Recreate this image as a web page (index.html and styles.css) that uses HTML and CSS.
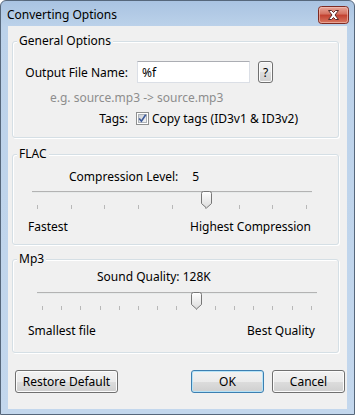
FILE: index.html
```html
<!DOCTYPE html>
<html lang="en">
<head>
	<meta charset="UTF-8">
	<title>Converting Options</title>
<link rel="stylesheet" href="styles.css">
</head>

<body>
<div class="window">
    <div class="titlebar">
        <span class="title">Converting Options</span>
        <span class="close">
            <svg width="31" height="18" viewBox="0 0 31 18">
                <defs>
                    <linearGradient id="red" x1="0" y1="0" x2="0" y2="1">
                        <stop offset="0" stop-color="#e9a99c"/>
                        <stop offset="0.45" stop-color="#d4705f"/>
                        <stop offset="0.5" stop-color="#c2402f"/>
                        <stop offset="1" stop-color="#d97a63"/>
                    </linearGradient>
                </defs>
                <rect x="0.5" y="0.5" width="30" height="17" rx="3" fill="url(#red)" stroke="#7d2a22"/>
                <rect x="1.5" y="1.5" width="28" height="15" rx="2" fill="none" stroke="#f3c7bd" stroke-opacity="0.6"/>
                <path d="M10.5,4.5 h3 l2,2 l2,-2 h3 l-3.5,4.5 l3.5,4.5 h-3 l-2,-2 l-2,2 h-3 l3.5,-4.5 z" fill="#fff" stroke="#5b2a26" stroke-width="1"/>
            </svg>
        </span>
    </div>
    <div class="client">
        <div class="group general">
            <div class="group-title">General Options</div>
            <div class="row first">
                <label class="field-label" for="output_name">Output File Name:</label>
                <input class="textbox" type="text" id="output_name" value="%f">
                <span class="button help">?</span>
            </div>
            <div class="hint">e.g. source.mp3 -&gt; source.mp3</div>
            <div class="row tags">
                <span class="field-label">Tags:</span>
                <span class="checkbox">
                    <svg width="13" height="13" viewBox="0 0 13 13">
                        <defs>
                            <linearGradient id="chk" x1="0" y1="0" x2="1" y2="1">
                                <stop offset="0" stop-color="#cbcfd5"/>
                                <stop offset="1" stop-color="#f6f6f6"/>
                            </linearGradient>
                        </defs>
                        <rect x="0.5" y="0.5" width="12" height="12" fill="#fff" stroke="#8e8f8f"/>
                        <rect x="2.5" y="2.5" width="8" height="8" fill="url(#chk)" stroke="#aeb3b9"/>
                        <path d="M3.2,6.6 l2.2,2.6 l4.3,-6.4" fill="none" stroke="#3d5a99" stroke-width="1.6"/>
                    </svg>
                </span>
                <span>Copy tags (ID3v1 &amp; ID3v2)</span>
            </div>
        </div>

        <div class="group flac">
            <div class="group-title">FLAC</div>
            <div class="caption">Compression Level:<span class="level">5</span></div>
            <div class="slider">
                <div class="track"></div>
                <div class="ticks">
                    <i></i><i></i><i></i><i></i><i></i><i></i><i></i><i></i><i></i>
                </div>
                <span class="thumb" style="left: 62.5%"></span>
            </div>
            <div class="ends">
                <span>Fastest</span>
                <span>Highest Compression</span>
            </div>
        </div>

        <div class="group mp3">
            <div class="group-title">Mp3</div>
            <div class="caption">Sound Quality: 128K</div>
            <div class="slider">
                <div class="track"></div>
                <div class="ticks">
                    <i></i><i></i><i></i><i></i><i></i><i></i><i></i><i></i><i></i><i></i><i></i><i></i><i></i><i></i><i></i>
                </div>
                <span class="thumb" style="left: 57.14%"></span>
            </div>
            <div class="ends">
                <span>Smallest file</span>
                <span>Best Quality</span>
            </div>
        </div>

        <div class="actions">
            <span class="button restore">Restore Default</span>
            <span class="spacer"></span>
            <span class="button ok">OK</span>
            <span class="button cancel">Cancel</span>
        </div>
    </div>
</div>
</body>
</html>
```

FILE: styles.css
```css
body {
    margin: 0;
    font-family: "Segoe UI", "Noto Sans", "Open Sans", sans-serif;
    font-size: 12px;
    color: #000;
    background: #fff;
}

.window {
    width: 355px;
    height: 415px;
    box-sizing: border-box;
    border: 1px solid #56677b;
    border-radius: 6px 6px 0 0;
    background: linear-gradient(#a9c3e1, #bcd2ea 26px, #c3d7ed);
    padding: 0 7px 5px;
    display: flex;
    flex-direction: column;
}

.titlebar {
    height: 25px;
    display: flex;
    align-items: center;
    justify-content: space-between;
}
.title {
    margin-left: -1px;
    margin-top: 2px;
}
.close {
    display: flex;
    margin: 2px -2px 0 0;
}

.client {
    flex: 1;
    background: #f0f0f0;
}

/* group boxes */
.group {
    box-sizing: border-box;
    margin: 15px 8px 0 4px;
    border: 1px solid #d5dfe5;
    border-radius: 3px;
    box-shadow: inset 1px 1px 0 #fff, 1px 1px 0 #fff;
}
.general {
    height: 97px;
}
.flac {
    height: 91px;
    margin-top: 16px;
}
.mp3 {
    height: 94px;
    margin-top: 14px;
}
.group-title {
    width: fit-content;
    margin: -8px 0 0 4px;
    padding: 0 2px;
    line-height: 14px;
    background: #f0f0f0;
}

.row {
    display: flex;
    align-items: center;
}
.first {
    margin-top: 13px;
}
.field-label {
    width: 115px;
    text-align: right;
    margin-right: 9px;
}
.textbox {
    width: 113px;
    height: 22px;
    box-sizing: border-box;
    margin: 0 8px 0 0;
    padding: 0 4px;
    border: 1px solid #dbdfe6;
    border-top-color: #abadb3;
    font: inherit;
    outline: none;
}
.hint {
    color: #8d8d8d;
    margin: 7px 0 0 37px;
    line-height: 15px;
}
.tags {
    margin-top: 6px;
    line-height: 15px;
}
.tags .field-label {
    margin-right: 8px;
}
.checkbox {
    display: flex;
    margin-right: 3px;
}

.button {
    display: flex;
    align-items: center;
    justify-content: center;
    box-sizing: border-box;
    height: 23px;
    border: 1px solid #707070;
    border-radius: 3px;
    background: linear-gradient(#f2f2f2, #ebebeb 50%, #dddddd 50%, #cfcfcf);
    box-shadow: inset 0 0 0 1px #fcfcfc;
}
.help {
    width: 15px;
    height: 22px;
}

/* sliders */
.caption {
    line-height: 14px;
}
.flac .caption {
    margin: 9px 0 0 56px;
}
.level {
    margin-left: 14px;
}
.mp3 .caption {
    margin: 4px 0 0 84px;
}

.slider {
    position: relative;
    height: 25px;
    margin: 7px 31px 0 24px;
}
.mp3 .slider {
    margin: 8px 26px 0 29px;
}
.track {
    height: 1px;
    margin: 7px -5px 0;
    background: #b3b3b3;
    border-bottom: 1px solid #e7eaea;
}
.ticks {
    display: flex;
    justify-content: space-between;
    margin-top: 12px;
}
.ticks i {
    width: 1px;
    height: 4px;
    background: #b8b8b8;
}
.thumb {
    position: absolute;
    top: 0;
    width: 11px;
    height: 18px;
    margin-left: -5px;
    background: url("data:image/svg+xml,%3Csvg xmlns='http://www.w3.org/2000/svg' width='11' height='18'%3E%3Cdefs%3E%3ClinearGradient id='g' x1='0' y1='0' x2='0' y2='1'%3E%3Cstop offset='0' stop-color='%23ffffff'/%3E%3Cstop offset='1' stop-color='%23dcdcdc'/%3E%3C/linearGradient%3E%3C/defs%3E%3Cpath d='M0.5,2.5 a2,2 0 0 1 2,-2 h6 a2,2 0 0 1 2,2 v10 l-5,4.5 l-5,-4.5 z' fill='url(%23g)' stroke='%23777'/%3E%3C/svg%3E") no-repeat;
}

.ends {
    display: flex;
    justify-content: space-between;
    line-height: 14px;
    margin: 4px 27px 0 15px;
}
.mp3 .ends {
    margin: 7px 23px 0 15px;
}

.actions {
    display: flex;
    margin: 17px 2px 0 7px;
}
.restore {
    width: 103px;
}
.spacer {
    flex: 1;
}
.ok,
.cancel {
    width: 73px;
}
.ok {
    margin-right: 8px;
    border-color: #3c7fb1;
    box-shadow: inset 0 0 0 1px #b6e3f7;
}
```
